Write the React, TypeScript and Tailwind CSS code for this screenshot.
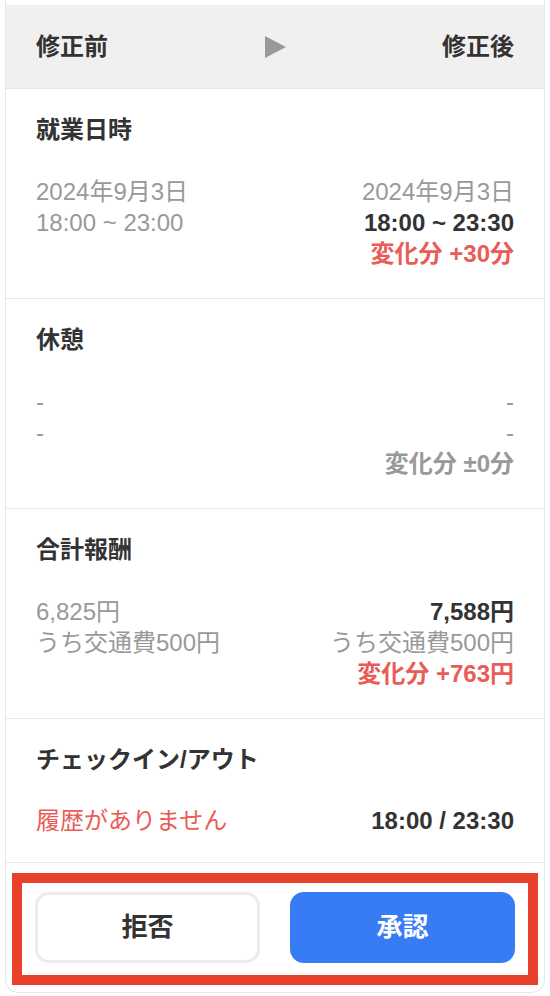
import React from "react";

const font = { fontFamily: '"Liberation Sans", "Noto Sans CJK JP", sans-serif' };

function Section({ title, children }: { title: string; children: React.ReactNode }) {
  return (
    <div className="border-b border-[#e6e6e6] px-[30px] pt-[27px] pb-[29px]">
      <div className="text-[24px] font-bold leading-[28px] text-[#333333]">{title}</div>
      <div className="mt-[32px] flex justify-between text-[24px] leading-[31px]">{children}</div>
    </div>
  );
}

export default function App() {
  return (
    <div className="min-h-[996px] bg-white" style={font}>
      <div className="ml-[5px] w-[540px] border-x border-b border-[#e6e6e6] rounded-b-[14px] bg-white">
        <div className="h-[5px]" />
        <div className="flex h-[84px] items-center justify-between border-b border-[#e6e6e6] bg-[#f0f0f0] px-[30px]">
          <span className="text-[24px] font-bold text-[#333333]">修正前</span>
          <svg width="21" height="22" viewBox="0 0 21 22">
            <polygon points="0,0 21,11 0,22" fill="#999999" />
          </svg>
          <span className="text-[24px] font-bold text-[#333333]">修正後</span>
        </div>

        <Section title="就業日時">
          <div className="text-[#999999]">
            <div>2024年9月3日</div>
            <div>18:00 ~ 23:00</div>
          </div>
          <div className="text-right">
            <div className="text-[#999999]">2024年9月3日</div>
            <div className="font-bold text-[#333333]">18:00 ~ 23:30</div>
            <div className="font-bold text-[#ea5c58]">変化分 +30分</div>
          </div>
        </Section>

        <Section title="休憩">
          <div className="text-[#999999]">
            <div>-</div>
            <div>-</div>
          </div>
          <div className="text-right text-[#999999]">
            <div>-</div>
            <div>-</div>
            <div className="font-bold">変化分 ±0分</div>
          </div>
        </Section>

        <Section title="合計報酬">
          <div className="text-[#999999]">
            <div>6,825円</div>
            <div>うち交通費500円</div>
          </div>
          <div className="text-right">
            <div className="font-bold text-[#333333]">7,588円</div>
            <div className="text-[#999999]">うち交通費500円</div>
            <div className="font-bold text-[#ea5c58]">変化分 +763円</div>
          </div>
        </Section>

        <div className="border-b border-[#e6e6e6] px-[30px] pt-[27px] pb-[26px]">
          <div className="text-[24px] font-bold leading-[28px] text-[#333333]">チェックイン/アウト</div>
          <div className="mt-[31px] flex justify-between text-[24px] leading-[31px]">
            <span className="text-[#ea5c58]">履歴がありません</span>
            <span className="font-bold text-[#333333]">18:00 / 23:30</span>
          </div>
        </div>

        <div className="relative grid grid-cols-2 gap-[30px] px-[29px] pt-[29px] pb-[29px]">
          <button className="flex h-[71px] items-center justify-center rounded-[14px] border-[3px] border-[#ececec] bg-white text-[26px] font-bold text-[#333333]">
            拒否
          </button>
          <button className="flex h-[71px] items-center justify-center rounded-[14px] bg-[#377bf5] text-[26px] font-bold text-white">
            承認
          </button>
          <div className="pointer-events-none absolute left-[6px] right-[6px] top-[10px] bottom-[7px] border-[10px] border-[#e8412b]" />
        </div>
      </div>
    </div>
  );
}
